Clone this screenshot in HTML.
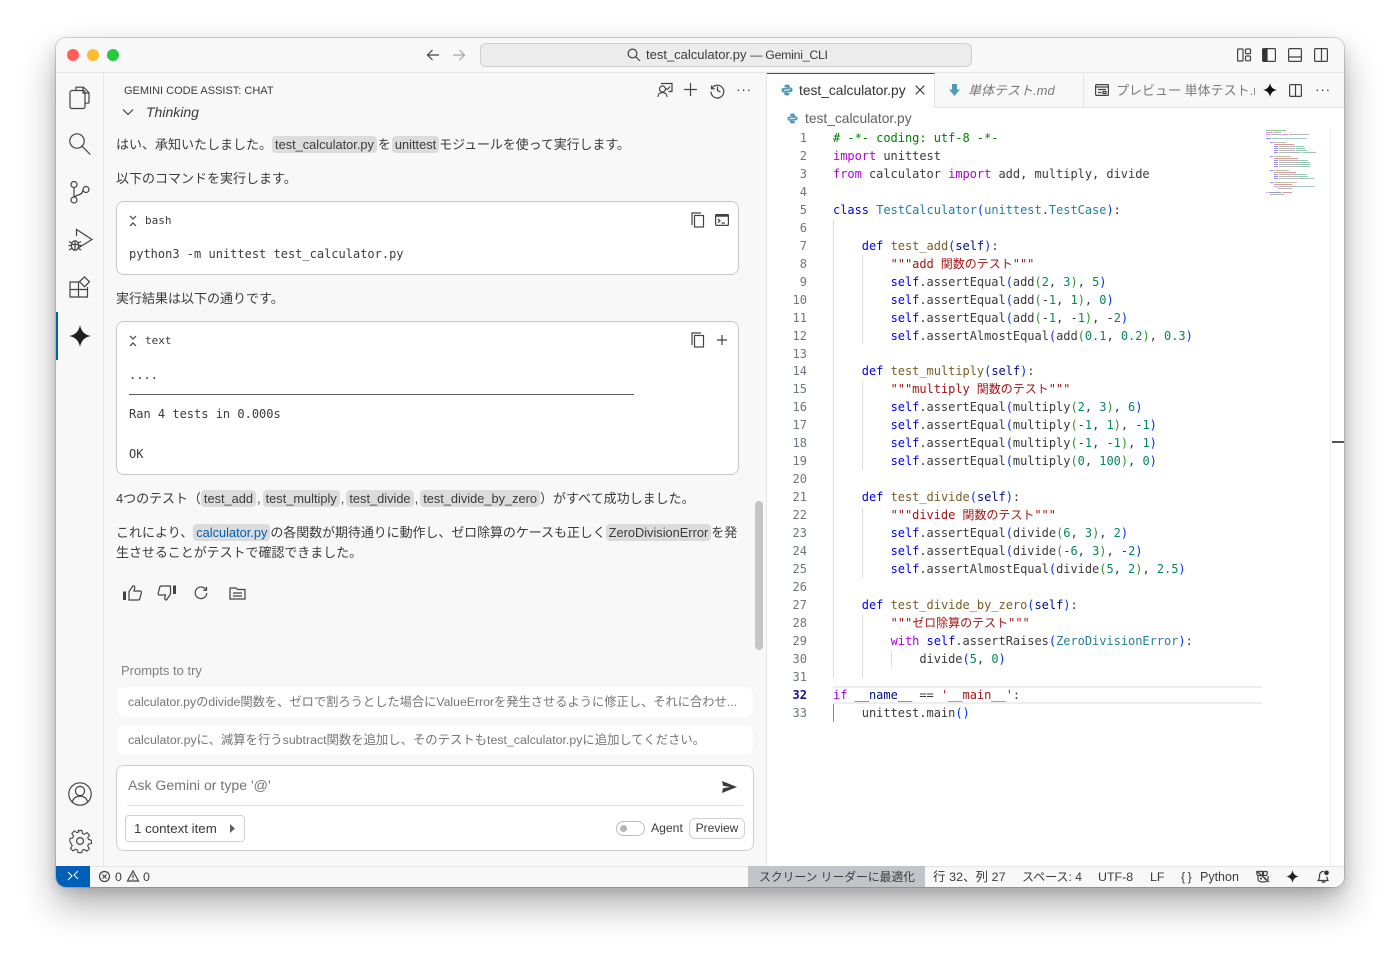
<!DOCTYPE html>
<html lang="ja"><head><meta charset="utf-8"><title>test_calculator.py</title>
<style>
*{box-sizing:border-box}
html,body{margin:0;padding:0;width:1400px;height:961px;overflow:hidden;background:#fff}
body{font-family:"Liberation Sans","Noto Sans CJK JP",sans-serif;color:#3b3b3b;position:relative}
#win{position:absolute;left:56px;top:38px;width:1288px;height:849px;border-radius:10px;background:#f8f8f8;box-shadow:0 0 0 1px rgba(0,0,0,.14),0 18px 36px rgba(0,0,0,.32),0 4px 12px rgba(0,0,0,.12)}
#app{position:absolute;left:56px;top:38px;width:1288px;height:849px;border-radius:10px;overflow:hidden;background:#f8f8f8}
.a{position:absolute;white-space:nowrap}
.abs{position:absolute;left:0;top:0;width:1400px;height:961px;pointer-events:none}
svg{position:absolute;overflow:visible}
.ic{fill:none;stroke:#424242;stroke-width:1.2}
.m{font-family:"DejaVu Sans Mono","Noto Sans CJK JP",monospace;font-size:12px}
.p{font-size:13px;line-height:20px;color:#3b3b3b}
code{font-family:"Liberation Sans","Noto Sans CJK JP",sans-serif;font-size:12.8px;background:#dcdcdc;border-radius:4px;padding:1px 3px;margin:0;color:#3b3b3b}
#code div{position:absolute;left:833px;white-space:pre;line-height:18px;height:18px;color:#3b3b3b;margin-top:-1px;letter-spacing:-.03px}
#nums div{position:absolute;left:780px;width:27px;text-align:right;line-height:18px;color:#6e7681;margin-top:-1px}
.k{color:#af00db}.b{color:#0000ff}.c{color:#008000}.s{color:#a31515}.t{color:#267f99}.f{color:#795e26}.v{color:#001080}.n{color:#098658}.p1{color:#0431fa}.p2{color:#319331}
.cj{font-size:12px;font-family:"Noto Sans CJK JP",sans-serif;margin-left:7px;letter-spacing:0}
.g{position:absolute;width:1px;background:#dedede}
.st{font-size:12.4px;line-height:16px}
.cm{margin:0 2px 0 1px}
</style></head><body>
<div id="win"></div>
<div id="app"></div>
<div class="abs" style="clip-path:inset(38px 56px 74px 56px round 10px)">
<!-- backgrounds -->
<div class="a" style="left:56px;top:72px;width:1288px;height:1px;background:#e5e5e5"></div>
<div class="a" style="left:103px;top:73px;width:1px;height:793px;background:#e5e5e5"></div>
<div class="a" style="left:767px;top:73px;width:577px;height:793px;background:#fff"></div>
<div class="a" style="left:766px;top:73px;width:1px;height:793px;background:#e5e5e5"></div>
<div class="a" style="left:767px;top:73px;width:577px;height:35px;background:#f8f8f8;border-bottom:1px solid #e5e5e5"></div>

<!-- title bar -->
<div class="a" style="left:67px;top:49px;width:12px;height:12px;border-radius:50%;background:#ff5f57"></div>
<div class="a" style="left:87px;top:49px;width:12px;height:12px;border-radius:50%;background:#febc2e"></div>
<div class="a" style="left:107px;top:49px;width:12px;height:12px;border-radius:50%;background:#28c840"></div>
<svg style="left:426px;top:48px" width="14" height="14" class="ic"><path d="M13 7H1.500M6.500 2 1.500 7l5 5"/></svg>
<svg style="left:452px;top:48px" width="14" height="14" class="ic" opacity=".45"><path d="M1 7h11.500M7.500 2l5 5-5 5"/></svg>
<div class="a" style="left:480px;top:43px;width:492px;height:24px;border-radius:6px;background:#ececec;border:1px solid #cfcfcf"></div>
<svg style="left:627px;top:48px" width="14" height="14" class="ic" stroke-width="1"><circle cx="5.500" cy="5.500" r="4.400"/><path d="M8.800 8.800 13 13"/></svg>
<div class="a" style="left:646px;top:47px;font-size:13px;line-height:16px;color:#3b3b3b">test_calculator.py <span style="font-size:12.300px;letter-spacing:-.25px">— Gemini_CLI</span></div>
<svg style="left:1237px;top:48px" width="14" height="14" class="ic"><rect x=".6" y="1" width="5.400" height="12" rx=".8"/><rect x="8.500" y="1" width="5" height="4.600" rx="1"/><rect x="8.500" y="8" width="5" height="4.800" rx="1"/></svg>
<svg style="left:1262px;top:48px" width="14" height="14" class="ic"><rect x=".6" y=".6" width="12.800" height="12.800" rx="1"/><rect x=".6" y=".6" width="5" height="12.800" fill="#333" stroke="none"/></svg>
<svg style="left:1288px;top:48px" width="14" height="14" class="ic"><rect x=".6" y=".6" width="12.800" height="12.800" rx="1"/><path d="M.6 9h12.800"/></svg>
<svg style="left:1314px;top:48px" width="14" height="14" class="ic"><rect x=".6" y=".6" width="12.800" height="12.800" rx="1"/><path d="M7.500.6v12.800"/></svg>

<!-- activity bar -->
<svg style="left:68px;top:85px" width="24" height="24" class="ic" stroke-width="1.300"><path d="M8 5.500V2.200h7.500l5.500 5.500V17c0 .8-.5 1.200-1.200 1.200H17"/><path d="M15 2.500V8h5.800"/><rect x="2" y="5.500" width="15" height="18" rx="2"/></svg>
<svg style="left:68px;top:132px" width="24" height="24" class="ic" stroke-width="1.300"><circle cx="9" cy="9" r="7.200"/><path d="M14 14.200 22.300 22.500"/></svg>
<svg style="left:68px;top:180px" width="24" height="24" class="ic" stroke-width="1.300"><circle cx="6" cy="4.500" r="3"/><circle cx="6" cy="20" r="3"/><circle cx="18" cy="9.500" r="3"/><path d="M6 7.500V17M15 9.700c-.1 3.600-3 5.200-6.500 5.800L6.800 17"/></svg>
<svg style="left:68px;top:228px" width="26" height="26" class="ic" stroke-width="1.300"><path d="M8.500 8V1.500L24 11.500 11 19.500"/><ellipse cx="7" cy="17.500" rx="3.600" ry="4.700"/><path d="M3.400 16.500h7.200M7 13v9M1 13.500l3 1.600M13 13.500l-3 1.600M.5 17.500h3M10.500 17.500h3M1 22l3-1.800M13 22l-3-1.800"/></svg>
<svg style="left:68px;top:276px" width="24" height="24" class="ic" stroke-width="1.300"><path d="M2 6h8.500v15H2zM2 13.500h17M10.500 13.500V21H19.500V11"/><path d="M11.500 5.500 16.500 1l5 4.800-5 5z"/></svg>
<div class="a" style="left:56px;top:312px;width:2px;height:48px;background:#005fb8"></div>
<svg style="left:69px;top:325px" width="22" height="22"><path d="M11 0C12 6 15.500 10 22 11 15.500 12 12 16 11 22 10 16 6.500 12 0 11 6.500 10 10 6 11 0z" fill="#1f1f1f"/></svg>
<svg style="left:68px;top:782px" width="24" height="24" class="ic" stroke-width="1.300"><circle cx="12" cy="12" r="11.200"/><circle cx="12" cy="9" r="4.600"/><path d="M4.300 20c1-4 4-5.800 7.700-5.800S18.700 16 19.700 20"/></svg>
<svg style="left:68px;top:829px" width="24" height="24" viewBox="0 0 24 24" class="ic" stroke-width="1.300"><circle cx="12" cy="12" r="3.400"/><path d="M10 1.500h4l.7 3.300 2 .9 2.900-1.900 2.800 2.800-1.900 2.900.9 2 3.100.7v3.600l-3.200.7-.9 2 1.900 2.900-2.800 2.800-2.900-1.900-2 .9-.7 2.700h-4l-.7-2.900-2-.9-2.900 1.900-2.800-2.800 1.900-2.900-.9-2L.9 14V10.400l3.100-.7.900-2L3 4.800l2.800-2.800 2.900 1.900 2-.9z" transform="translate(1.100 .1) scale(.91)"/></svg>

<!-- chat header -->
<svg style="left:122px;top:108px" width="12" height="9" class="ic"><path d="M1 1.500l5 5 5-5"/></svg>
<div class="a" style="left:146px;top:103px;font-size:14px;line-height:18px;font-style:italic;color:#3b3b3b">Thinking</div>
<div class="a" style="left:110px;top:96px;width:500px;height:11px;background:#f8f8f8"></div>
<div class="a" style="left:124px;top:84px;font-size:11px;line-height:14px;color:#3b3b3b">GEMINI CODE ASSIST: CHAT</div>
<svg style="left:657px;top:82px" width="16" height="16" class="ic"><circle cx="5.500" cy="7" r="3"/><path d="M.8 15c.3-3 2.300-4.500 4.700-4.500s4.400 1.500 4.700 4.500M4 1.500h11v8h-3.500"/><path d="M9 6.500l1.500 1 2.500-3"/></svg>
<svg style="left:683px;top:82px" width="15" height="15" class="ic" stroke-width="1.300"><path d="M7.500 1v13M1 7.500h13"/></svg>
<svg style="left:709px;top:82px" width="16" height="16" class="ic"><path d="M2.500 3.500v3.300h3.300M2.800 6.500A6.400 6.400 0 1 1 2 9.500"/><path d="M8.500 4.500v4l3 1.500"/></svg>
<div class="a" style="left:736px;top:80px;font-size:14px;line-height:18px;letter-spacing:.6px;color:#424242">···</div>

<div class="a p" style="left:116px;top:135px"><span>はい、承知いたしました。</span><code>test_calculator.py</code><span style="margin:0 1px">を</span><code>unittest</code><span style="letter-spacing:-.1px">モジュールを使って実行します。</span></div>
<div class="a p" style="left:116px;top:169px">以下のコマンドを実行します。</div>

<!-- bash block -->
<div class="a" style="left:116px;top:201px;width:623px;height:74px;background:#fff;border:1px solid #c8c8c8;border-radius:8px"></div>
<svg style="left:129px;top:216px" width="8" height="10" class="ic"><path d="M1 0l3 3 3-3M1 10l3-3 3 3"/></svg>
<div class="a m" style="left:145px;top:214px;font-size:11px;line-height:14px">bash</div>
<svg style="left:691px;top:212px" width="14" height="16" class="ic" stroke-width="1.200"><path d="M1 13V1h9"/><rect x="3.500" y="3.500" width="9" height="11.500"/></svg>
<svg style="left:715px;top:214px" width="14" height="12" class="ic"><rect x=".6" y=".6" width="12.800" height="10.800" rx="1"/><path d="M.6 1.500h12.800" stroke-width="2.500"/><path d="M3 5l2 1.800L3 8.500M6.500 9H10"/></svg>
<div class="a m" style="left:129px;top:246px;line-height:16px">python3 -m unittest test_calculator.py</div>

<div class="a p" style="left:116px;top:289px">実行結果は以下の通りです。</div>

<!-- text block -->
<div class="a" style="left:116px;top:321px;width:623px;height:154px;background:#fff;border:1px solid #c8c8c8;border-radius:8px"></div>
<svg style="left:129px;top:336px" width="8" height="10" class="ic"><path d="M1 0l3 3 3-3M1 10l3-3 3 3"/></svg>
<div class="a m" style="left:145px;top:334px;font-size:11px;line-height:14px">text</div>
<svg style="left:691px;top:332px" width="14" height="16" class="ic" stroke-width="1.200"><path d="M1 13V1h9"/><rect x="3.500" y="3.500" width="9" height="11.500"/></svg>
<svg style="left:717px;top:335px" width="10" height="10" class="ic"><path d="M5 0v10M0 5h10"/></svg>
<div class="a m" style="left:129px;top:367px;line-height:16px">....</div>
<div class="a m" style="left:129px;top:386px;line-height:16px">----------------------------------------------------------------------</div>
<div class="a" style="left:129px;top:394px;width:505px;height:1px;background:#5a5a5a"></div>
<div class="a m" style="left:129px;top:406px;line-height:16px">Ran 4 tests in 0.000s</div>
<div class="a m" style="left:129px;top:446px;line-height:16px">OK</div>

<div class="a p" style="left:116px;top:489px"><span style="letter-spacing:-.05px">4つのテスト（</span><code>test_add</code><span class="cm">,</span><code>test_multiply</code><span class="cm">,</span><code>test_divide</code><span class="cm">,</span><code>test_divide_by_zero</code>）がすべて成功しました。</div>
<div class="a p" style="left:116px;top:523px">これにより、<code style="color:#005fb8">calculator.py</code><span style="letter-spacing:-.08px">の各関数が期待通りに動作し、ゼロ除算のケースも正しく</span><code>ZeroDivisionError</code>を発</div>
<div class="a p" style="left:116px;top:543px;letter-spacing:-.05px">生させることがテストで確認できました。</div>

<svg style="left:123px;top:585px" width="20" height="16" class="ic" stroke-width="1.500"><path d="M1.500 6.500v8.500" stroke-width="3"/><path d="M6 6.500 10 .8c1.500 0 2 1 1.700 2.300L11 6h6c1 0 1.500.8 1.300 1.700l-1.500 6c-.2.800-.8 1.300-1.600 1.300H6z"/></svg>
<svg style="left:157px;top:585px" width="20" height="16" class="ic" stroke-width="1.500"><path d="M17.500 9V.5" stroke-width="3"/><path d="M13.500 9 9.500 15c-1.500 0-2-1-1.700-2.300L8.500 10h-6c-1 0-1.500-.8-1.300-1.700l1.500-6C2.900 1.500 3.500 1 4.300 1h9.200z"/></svg>
<svg style="left:194px;top:586px" width="14" height="14" class="ic" stroke-width="1.700"><path d="M11.800 3.500A5.800 5.800 0 1 0 12.800 7"/><path d="M12.500.8v3.500H9"/></svg>
<svg style="left:229px;top:587px" width="17" height="13" class="ic" stroke-width="1.500"><path d="M1 1h6l1.500 1.500H16v9.500H1zM4 6h9M4 9h9"/></svg>

<!-- scrollbar -->
<div class="a" style="left:755px;top:501px;width:8px;height:149px;border-radius:4px;background:#c6c6c6"></div>

<!-- prompts -->
<div class="a" style="left:121px;top:663px;font-size:13px;line-height:16px;color:#808080">Prompts to try</div>
<div class="a" style="left:117px;top:687px;width:636px;height:30px;background:#fff;border-radius:8px"></div>
<div class="a" style="left:128px;top:694px;font-size:12.260px;line-height:16px;color:#757575">calculator.pyのdivide関数を、ゼロで割ろうとした場合にValueErrorを発生させるように修正し、それに合わせ...</div>
<div class="a" style="left:117px;top:725px;width:636px;height:30px;background:#fff;border-radius:8px"></div>
<div class="a" style="left:128px;top:732px;font-size:12.350px;line-height:16px;color:#757575">calculator.pyに、減算を行うsubtract関数を追加し、そのテストもtest_calculator.pyに追加してください。</div>

<!-- input -->
<div class="a" style="left:116px;top:765px;width:638px;height:86px;background:#fff;border:1px solid #cfcfcf;border-radius:8px"></div>
<div class="a" style="left:128px;top:777px;font-size:14.100px;line-height:17px;color:#757575">Ask Gemini or type '@'</div>
<svg style="left:722px;top:781px" width="15" height="12"><path d="M0 0 15 6 0 12 1 7.300 8 6 1 4.700z" fill="#3b3b3b"/></svg>
<div class="a" style="left:127px;top:805px;width:616px;height:1px;background:#e0e0e0"></div>
<div class="a" style="left:125px;top:815px;width:120px;height:27px;border:1px solid #d0d0d0;border-radius:4px;background:#fff"></div>
<div class="a" style="left:134px;top:821px;font-size:13.300px;line-height:15px;color:#3b3b3b">1 context item</div>
<svg style="left:230px;top:824px" width="5" height="9"><path d="M0 0l5 4.500L0 9z" fill="#616161"/></svg>
<div class="a" style="left:616px;top:821px;width:29px;height:15px;border:1px solid #bdbdbd;border-radius:8px;background:#fff"></div>
<div class="a" style="left:620px;top:825px;width:7px;height:7px;border-radius:50%;background:#b5b5b5"></div>
<div class="a" style="left:651px;top:821px;font-size:12.200px;line-height:15px;color:#3b3b3b">Agent</div>
<div class="a" style="left:689px;top:818px;width:56px;height:21px;border:1px solid #d0d0d0;border-radius:6px;background:#fff;font-size:12px;line-height:19px;text-align:center;color:#3b3b3b">Preview</div>

<!-- tabs -->
<div class="a" style="left:767px;top:73px;width:168px;height:35px;background:#fff;border-top:1px solid #005fb8;border-right:1px solid #e5e5e5"></div>
<svg style="left:781px;top:84px" width="12" height="12" viewBox="0 0 12 12"><path d="M6 .5C4 .5 3.500 1.300 3.500 2.300V3.500H6.200V4H2C1 4 .5 5 .5 6.200S1 8.500 2 8.500H3V7C3 6 3.800 5.500 4.600 5.500H7.500C8.300 5.500 8.800 5 8.800 4.200V2.300C8.800 1.200 7.800.5 6 .5z" fill="#519aba"/><path d="M6 11.500C8 11.500 8.500 10.700 8.500 9.700V8.500H5.800V8H10C11 8 11.500 7 11.500 5.800S11 3.500 10 3.500H9V5C9 6 8.200 6.500 7.400 6.500H4.500C3.700 6.500 3.200 7 3.200 7.800V9.700C3.200 10.800 4.200 11.500 6 11.500z" fill="#519aba"/></svg>
<div class="a" style="left:799px;top:82px;font-size:13.800px;line-height:17px;color:#333">test_calculator.py</div>
<svg style="left:915px;top:85px" width="10" height="10" class="ic" stroke-width="1"><path d="M.7.7l8.600 8.600M9.300.7.700 9.300"/></svg>
<div class="a" style="left:1083px;top:73px;width:1px;height:34px;background:#e5e5e5"></div>
<svg style="left:949px;top:84px" width="11" height="12"><path d="M3 0h5v5.500h3L5.500 12 0 5.500h3z" fill="#519aba"/></svg>
<div class="a" style="left:968px;top:82px;font-size:13px;line-height:17px;font-style:italic;color:#7a7a7a">単体テスト.md</div>
<svg style="left:1095px;top:84px" width="14" height="12" class="ic"><rect x=".6" y=".6" width="12.800" height="10.800" rx="1"/><path d="M.6 3h12.800M3 5.500h8M3 8.500h3.500M8 7.500h3v2H8z"/></svg>
<div class="a" style="left:1116px;top:82px;width:139px;overflow:hidden;font-size:13px;line-height:17px;color:#7a7a7a">プレビュー 単体テスト.md</div>
<svg style="left:1263px;top:83px" width="14" height="14"><path d="M7 0C7.600 3.800 10 6.400 14 7 10 7.600 7.600 10.200 7 14 6.400 10.200 4 7.600 0 7 4 6.400 6.400 3.800 7 0z" fill="#111"/></svg>
<svg style="left:1289px;top:84px" width="13" height="13" class="ic"><rect x=".6" y=".6" width="11.800" height="11.800" rx="1"/><path d="M6.500.6v11.800"/></svg>
<div class="a" style="left:1315px;top:80px;font-size:14px;line-height:18px;letter-spacing:.6px;color:#424242">···</div>

<!-- breadcrumb -->
<svg style="left:787px;top:113px" width="11" height="11" viewBox="0 0 12 12"><path d="M6 .5C4 .5 3.500 1.300 3.500 2.300V3.500H6.200V4H2C1 4 .5 5 .5 6.200S1 8.500 2 8.500H3V7C3 6 3.800 5.500 4.600 5.500H7.500C8.300 5.500 8.800 5 8.800 4.200V2.300C8.800 1.200 7.800.5 6 .5z" fill="#519aba"/><path d="M6 11.500C8 11.500 8.500 10.700 8.500 9.700V8.500H5.800V8H10C11 8 11.500 7 11.500 5.800S11 3.500 10 3.500H9V5C9 6 8.200 6.500 7.400 6.500H4.500C3.700 6.500 3.200 7 3.200 7.800V9.700C3.200 10.800 4.200 11.500 6 11.500z" fill="#519aba"/></svg>
<div class="a" style="left:805px;top:111px;font-size:13.800px;line-height:16px;color:#616161">test_calculator.py</div>

<!-- indent guides -->
<div class="g" style="left:833px;top:219px;height:459px"></div>
<div class="g" style="left:862px;top:255px;height:89px"></div>
<div class="g" style="left:862px;top:381px;height:89px"></div>
<div class="g" style="left:862px;top:507px;height:71px"></div>
<div class="g" style="left:862px;top:614px;height:64px"></div>
<div class="g" style="left:891px;top:650px;height:18px"></div>
<div class="g" style="left:833px;top:704px;height:18px;background:#8a8a8a"></div>
<!-- current line -->
<div class="a" style="left:833px;top:686px;width:429px;height:18px;border-top:2px solid #eeeeee;border-bottom:2px solid #eeeeee"></div>

<!-- line numbers -->
<div id="nums" class="m">
<div style="top:130px">1</div><div style="top:148px">2</div><div style="top:166px">3</div><div style="top:184px">4</div><div style="top:202px">5</div><div style="top:220px">6</div><div style="top:238px">7</div><div style="top:256px">8</div><div style="top:274px">9</div><div style="top:292px">10</div><div style="top:310px">11</div><div style="top:328px">12</div><div style="top:346px">13</div><div style="top:363px">14</div><div style="top:381px">15</div><div style="top:399px">16</div><div style="top:417px">17</div><div style="top:435px">18</div><div style="top:453px">19</div><div style="top:471px">20</div><div style="top:489px">21</div><div style="top:507px">22</div><div style="top:525px">23</div><div style="top:543px">24</div><div style="top:561px">25</div><div style="top:579px">26</div><div style="top:597px">27</div><div style="top:615px">28</div><div style="top:633px">29</div><div style="top:651px">30</div><div style="top:669px">31</div><div style="top:686px;margin-top:0;color:#171184;font-weight:bold">32</div><div style="top:704px;margin-top:0">33</div>
</div>

<!-- code -->
<div id="code" class="m">
<div style="top:130px"><span class="c"># -*- coding: utf-8 -*-</span></div>
<div style="top:148px"><span class="k">import</span> unittest</div>
<div style="top:166px"><span class="k">from</span> calculator <span class="k">import</span> add, multiply, divide</div>
<div style="top:202px"><span class="b">class</span> <span class="t">TestCalculator</span><span class="p1">(</span><span class="t">unittest</span>.<span class="t">TestCase</span><span class="p1">)</span>:</div>
<div style="top:238px">    <span class="b">def</span> <span class="f">test_add</span><span class="p1">(</span><span class="v">self</span><span class="p1">)</span>:</div>
<div style="top:256px">        <span class="s">"""add<span class="cj">関数のテスト</span>"""</span></div>
<div style="top:274px">        <span class="b">self</span>.assertEqual<span class="p1">(</span>add<span class="p2">(</span><span class="n">2</span>, <span class="n">3</span><span class="p2">)</span>, <span class="n">5</span><span class="p1">)</span></div>
<div style="top:292px">        <span class="b">self</span>.assertEqual<span class="p1">(</span>add<span class="p2">(</span>-<span class="n">1</span>, <span class="n">1</span><span class="p2">)</span>, <span class="n">0</span><span class="p1">)</span></div>
<div style="top:310px">        <span class="b">self</span>.assertEqual<span class="p1">(</span>add<span class="p2">(</span>-<span class="n">1</span>, -<span class="n">1</span><span class="p2">)</span>, -<span class="n">2</span><span class="p1">)</span></div>
<div style="top:328px">        <span class="b">self</span>.assertAlmostEqual<span class="p1">(</span>add<span class="p2">(</span><span class="n">0.1</span>, <span class="n">0.2</span><span class="p2">)</span>, <span class="n">0.3</span><span class="p1">)</span></div>
<div style="top:363px">    <span class="b">def</span> <span class="f">test_multiply</span><span class="p1">(</span><span class="v">self</span><span class="p1">)</span>:</div>
<div style="top:381px">        <span class="s">"""multiply<span class="cj">関数のテスト</span>"""</span></div>
<div style="top:399px">        <span class="b">self</span>.assertEqual<span class="p1">(</span>multiply<span class="p2">(</span><span class="n">2</span>, <span class="n">3</span><span class="p2">)</span>, <span class="n">6</span><span class="p1">)</span></div>
<div style="top:417px">        <span class="b">self</span>.assertEqual<span class="p1">(</span>multiply<span class="p2">(</span>-<span class="n">1</span>, <span class="n">1</span><span class="p2">)</span>, -<span class="n">1</span><span class="p1">)</span></div>
<div style="top:435px">        <span class="b">self</span>.assertEqual<span class="p1">(</span>multiply<span class="p2">(</span>-<span class="n">1</span>, -<span class="n">1</span><span class="p2">)</span>, <span class="n">1</span><span class="p1">)</span></div>
<div style="top:453px">        <span class="b">self</span>.assertEqual<span class="p1">(</span>multiply<span class="p2">(</span><span class="n">0</span>, <span class="n">100</span><span class="p2">)</span>, <span class="n">0</span><span class="p1">)</span></div>
<div style="top:489px">    <span class="b">def</span> <span class="f">test_divide</span><span class="p1">(</span><span class="v">self</span><span class="p1">)</span>:</div>
<div style="top:507px">        <span class="s">"""divide<span class="cj">関数のテスト</span>"""</span></div>
<div style="top:525px">        <span class="b">self</span>.assertEqual<span class="p1">(</span>divide<span class="p2">(</span><span class="n">6</span>, <span class="n">3</span><span class="p2">)</span>, <span class="n">2</span><span class="p1">)</span></div>
<div style="top:543px">        <span class="b">self</span>.assertEqual<span class="p1">(</span>divide<span class="p2">(</span>-<span class="n">6</span>, <span class="n">3</span><span class="p2">)</span>, -<span class="n">2</span><span class="p1">)</span></div>
<div style="top:561px">        <span class="b">self</span>.assertAlmostEqual<span class="p1">(</span>divide<span class="p2">(</span><span class="n">5</span>, <span class="n">2</span><span class="p2">)</span>, <span class="n">2.5</span><span class="p1">)</span></div>
<div style="top:597px">    <span class="b">def</span> <span class="f">test_divide_by_zero</span><span class="p1">(</span><span class="v">self</span><span class="p1">)</span>:</div>
<div style="top:615px">        <span class="s">"""<span class="cj" style="margin:0">ゼロ除算のテスト</span>"""</span></div>
<div style="top:633px">        <span class="k">with</span> <span class="b">self</span>.assertRaises<span class="p1">(</span><span class="t">ZeroDivisionError</span><span class="p1">)</span>:</div>
<div style="top:651px">            divide<span class="p1">(</span><span class="n">5</span>, <span class="n">0</span><span class="p1">)</span></div>
<div style="top:686px;margin-top:0"><span class="k">if</span> <span class="v">__name__</span> == <span class="s">'__main__'</span>:</div>
<div style="top:704px;margin-top:0">    unittest.main<span class="p1">()</span></div>
</div>

<!-- minimap -->
<svg style="left:1266px;top:130px;opacity:.42" width="52" height="66">
<g>
<rect x="0" y="0" width="20" height="1" fill="#008000"/>
<rect x="0" y="2" width="6" height="1" fill="#af00db"/><rect x="7" y="2" width="8" height="1" fill="#555"/>
<rect x="0" y="4" width="4" height="1" fill="#af00db"/><rect x="5" y="4" width="10" height="1" fill="#555"/><rect x="16" y="4" width="6" height="1" fill="#af00db"/><rect x="23" y="4" width="20" height="1" fill="#555"/>
<rect x="0" y="8" width="5" height="1" fill="#0000ff"/><rect x="6" y="8" width="35" height="1" fill="#267f99"/>
<rect x="4" y="12" width="3" height="1" fill="#0000ff"/><rect x="8" y="12" width="12" height="1" fill="#795e26"/>
<rect x="8" y="14" width="20" height="1" fill="#a31515"/>
<rect x="8" y="16" width="4" height="1" fill="#0000ff"/><rect x="13" y="16" width="16" height="1" fill="#555"/><rect x="30" y="16" width="8" height="1" fill="#098658"/>
<rect x="8" y="18" width="4" height="1" fill="#0000ff"/><rect x="13" y="18" width="16" height="1" fill="#555"/><rect x="30" y="18" width="9" height="1" fill="#098658"/>
<rect x="8" y="20" width="4" height="1" fill="#0000ff"/><rect x="13" y="20" width="16" height="1" fill="#555"/><rect x="30" y="20" width="11" height="1" fill="#098658"/>
<rect x="8" y="22" width="4" height="1" fill="#0000ff"/><rect x="13" y="22" width="22" height="1" fill="#555"/><rect x="36" y="22" width="14" height="1" fill="#098658"/>
<rect x="4" y="26" width="3" height="1" fill="#0000ff"/><rect x="8" y="26" width="17" height="1" fill="#795e26"/>
<rect x="8" y="28" width="24" height="1" fill="#a31515"/>
<rect x="8" y="30" width="4" height="1" fill="#0000ff"/><rect x="13" y="30" width="21" height="1" fill="#555"/><rect x="34" y="30" width="8" height="1" fill="#098658"/>
<rect x="8" y="32" width="4" height="1" fill="#0000ff"/><rect x="13" y="32" width="21" height="1" fill="#555"/><rect x="34" y="32" width="10" height="1" fill="#098658"/>
<rect x="8" y="34" width="4" height="1" fill="#0000ff"/><rect x="13" y="34" width="21" height="1" fill="#555"/><rect x="34" y="34" width="11" height="1" fill="#098658"/>
<rect x="8" y="36" width="4" height="1" fill="#0000ff"/><rect x="13" y="36" width="21" height="1" fill="#555"/><rect x="34" y="36" width="10" height="1" fill="#098658"/>
<rect x="4" y="40" width="3" height="1" fill="#0000ff"/><rect x="8" y="40" width="15" height="1" fill="#795e26"/>
<rect x="8" y="42" width="22" height="1" fill="#a31515"/>
<rect x="8" y="44" width="4" height="1" fill="#0000ff"/><rect x="13" y="44" width="19" height="1" fill="#555"/><rect x="32" y="44" width="9" height="1" fill="#098658"/>
<rect x="8" y="46" width="4" height="1" fill="#0000ff"/><rect x="13" y="46" width="19" height="1" fill="#555"/><rect x="32" y="46" width="10" height="1" fill="#098658"/>
<rect x="8" y="48" width="4" height="1" fill="#0000ff"/><rect x="13" y="48" width="25" height="1" fill="#555"/><rect x="38" y="48" width="10" height="1" fill="#098658"/>
<rect x="4" y="52" width="3" height="1" fill="#0000ff"/><rect x="8" y="52" width="23" height="1" fill="#795e26"/>
<rect x="8" y="54" width="18" height="1" fill="#a31515"/>
<rect x="8" y="56" width="4" height="1" fill="#af00db"/><rect x="13" y="56" width="18" height="1" fill="#555"/><rect x="31" y="56" width="18" height="1" fill="#267f99"/>
<rect x="12" y="58" width="14" height="1" fill="#555"/>
<rect x="0" y="62" width="2" height="1" fill="#af00db"/><rect x="3" y="62" width="12" height="1" fill="#001080"/><rect x="16" y="62" width="10" height="1" fill="#a31515"/>
<rect x="4" y="64" width="14" height="1" fill="#555"/>
</g></svg>
<div class="a" style="left:1330px;top:128px;width:1px;height:738px;background:#f0f0f0"></div>
<div class="a" style="left:1332px;top:441px;width:12px;height:2px;background:#555"></div>

<!-- status bar -->
<div class="a" style="left:56px;top:866px;width:1288px;height:21px;background:#f8f8f8;border-top:1px solid #e5e5e5"></div>
<div class="a" style="left:56px;top:866px;width:34px;height:21px;background:#005fb8"></div>
<svg style="left:68px;top:871px" width="10" height="10" fill="none" stroke="#fff" stroke-width="1"><path d="M0 9 4 5 0 1M10 0 6 4 10 8"/></svg>
<svg style="left:99px;top:871px" width="11" height="11" class="ic" stroke-width="1"><circle cx="5.500" cy="5.500" r="5"/><path d="M3.500 3.500l4 4M7.500 3.500l-4 4"/></svg>
<div class="a" style="left:115px;top:869px;font-size:12.400px;line-height:16px">0</div>
<svg style="left:127px;top:870px" width="12" height="12" class="ic" stroke-width="1"><path d="M6 1 11.500 11H.5zM6 4.500V8M6 9v1"/></svg>
<div class="a" style="left:143px;top:869px;font-size:12.400px;line-height:16px">0</div>
<div class="a" style="left:748px;top:866px;width:177px;height:21px;background:#c1c4c8"></div>
<div class="a st" style="left:759px;top:869px;font-size:11.800px">スクリーン リーダーに最適化</div>
<div class="a st" style="left:933px;top:869px;letter-spacing:.12px">行 32、列 27</div>
<div class="a st" style="left:1022px;top:869px;font-size:12px">スペース: 4</div>
<div class="a st" style="left:1098px;top:869px">UTF-8</div>
<div class="a st" style="left:1150px;top:869px">LF</div>
<div class="a st" style="left:1181px;top:869px;letter-spacing:-.5px">{ }</div>
<div class="a st" style="left:1200px;top:869px;font-size:12.500px">Python</div>
<svg style="left:1256px;top:870px" width="14" height="13" class="ic"><path d="M3 1.500h3.500v4H2c-1 0-1.500-3-1-4zM7.500 1.500H11c.6 1 0 4-1 4H7.500zM2 6v3c0 2 2 3 5 3s5-1 5-3V6M.5 1 13 12"/><circle cx="5" cy="8.500" r=".5"/><circle cx="9" cy="8.500" r=".5"/></svg>
<svg style="left:1286px;top:870px" width="13" height="13"><path d="M6.500 0C7 3.500 9 6 13 6.500 9 7 7 9.500 6.500 13 6 9.500 4 7 0 6.500 4 6 6 3.500 6.500 0z" fill="#222"/></svg>
<svg style="left:1317px;top:870px" width="13" height="13" class="ic" stroke-width="1"><path d="M7 1.500C4.500 1 2.500 3 2.500 5.500V8L1 10.500h10L10 8V6.500M5 10.500c0 2.500 3 2.500 3.200 0"/><circle cx="9.500" cy="2.800" r="2.300" fill="#333" stroke="none"/></svg>
</div>
</body></html>
